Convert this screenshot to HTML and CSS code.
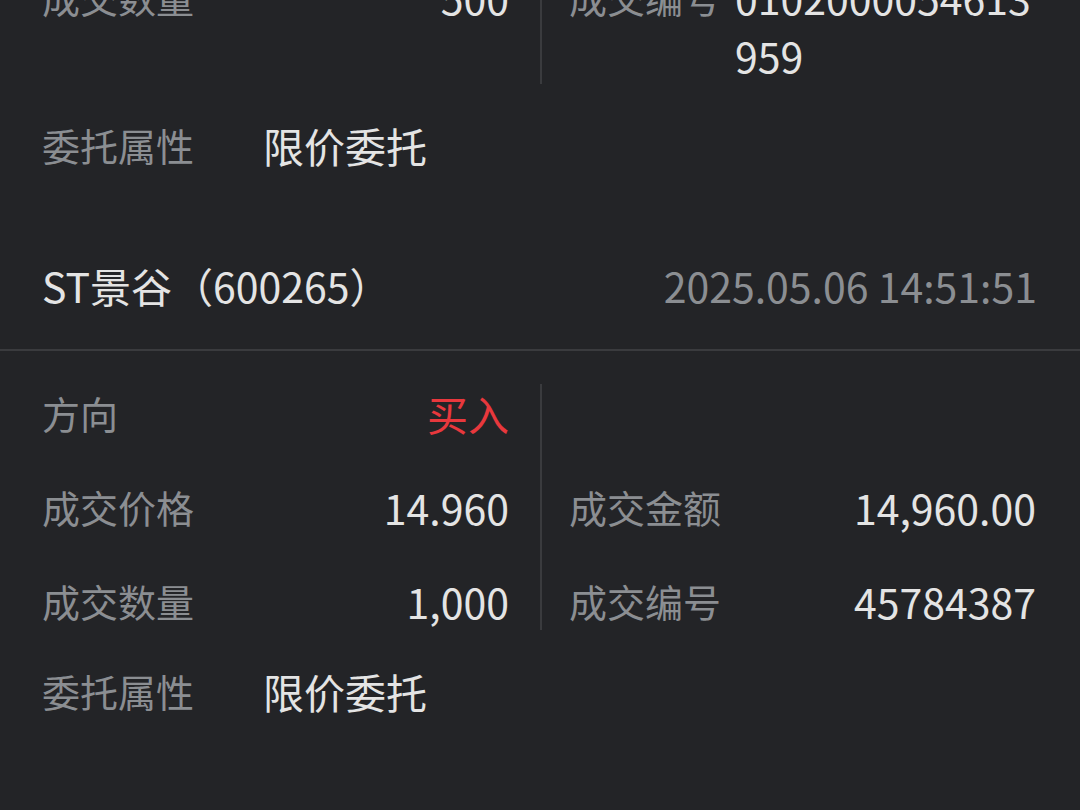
FILE: index.html
```html
<!DOCTYPE html>
<html lang="zh-CN">
<head>
  <meta charset="UTF-8">
  <title>成交明细</title>
  <link rel="stylesheet" href="styles.css">
</head>
<body>

<div class="deal-list">

  <!-- first record, scrolled partly out of view -->
  <section class="deal deal-first">
    <div class="deal-head">
      <span class="stock-name">ST景谷（600265）</span>
      <span class="deal-time">2025.05.06 14:50:12</span>
    </div>
    <div class="deal-grid">
      <div class="deal-col">
        <div class="row"><span class="label">方向</span><span class="value buy">买入</span></div>
        <div class="row"><span class="label">成交价格</span><span class="value">14.960</span></div>
        <div class="row"><span class="label">成交数量</span><span class="value">500</span></div>
      </div>
      <div class="deal-col deal-col-right">
        <div class="row"></div>
        <div class="row"><span class="label">成交金额</span><span class="value">7,480.00</span></div>
        <div class="row"><span class="label">成交编号</span><span class="value">0102000054613959</span></div>
      </div>
    </div>
    <div class="deal-prop">
      <span class="label">委托属性</span><span class="value">限价委托</span>
    </div>
  </section>

  <section class="deal">
    <div class="deal-head">
      <span class="stock-name">ST景谷（600265）</span>
      <span class="deal-time">2025.05.06 14:51:51</span>
    </div>
    <div class="deal-grid">
      <div class="deal-col">
        <div class="row"><span class="label">方向</span><span class="value buy">买入</span></div>
        <div class="row"><span class="label">成交价格</span><span class="value">14.960</span></div>
        <div class="row"><span class="label">成交数量</span><span class="value">1,000</span></div>
      </div>
      <div class="deal-col deal-col-right">
        <div class="row"></div>
        <div class="row"><span class="label">成交金额</span><span class="value">14,960.00</span></div>
        <div class="row"><span class="label">成交编号</span><span class="value">45784387</span></div>
      </div>
    </div>
    <div class="deal-prop">
      <span class="label">委托属性</span><span class="value">限价委托</span>
    </div>
  </section>

</div>

</body>
</html>
```

FILE: styles.css
```css
body {
  margin: 0;
  background-color: #232427;
  font-family: "Noto Sans CJK SC", "Noto Sans", sans-serif;
  font-size: 41px;
  line-height: 58px;
  color: #e4e4e4;
  overflow: hidden;
}

.deal-list {
  width: 1080px;
}

.deal {
  padding-bottom: 52px;
}

/* list is scrolled: only the bottom of the first record shows */
.deal-first {
  margin-top: -378px;
}

.deal-head {
  display: flex;
  justify-content: space-between;
  align-items: center;
  padding: 30px 43px 35px 42px;
  border-bottom: 2px solid #3a3b3e;
}

.deal-time {
  color: #8b8e92;
}

.deal-grid {
  display: grid;
  grid-template-columns: 1fr 1fr;
  margin-top: 33px;
}

.deal-col {
  display: flex;
  flex-direction: column;
  gap: 36px;
  padding: 0 31px 0 42px;
}

.deal-col-right {
  border-left: 2px solid #3a3b3e;
  padding: 0 44px 0 27px;
}

.row {
  display: flex;
  gap: 14px;
  min-height: 58px;
}

.label {
  flex-shrink: 0;
  font-size: 38px;
  color: #8b8e92;
}

.row .value {
  margin-left: auto;
  min-width: 0;
  word-break: break-all;
}

.value.buy {
  color: #e8383d;
}

.deal-prop {
  display: flex;
  margin-top: 32px;
  padding-left: 42px;
}

.deal-prop .label {
  width: 221px;
}
```
